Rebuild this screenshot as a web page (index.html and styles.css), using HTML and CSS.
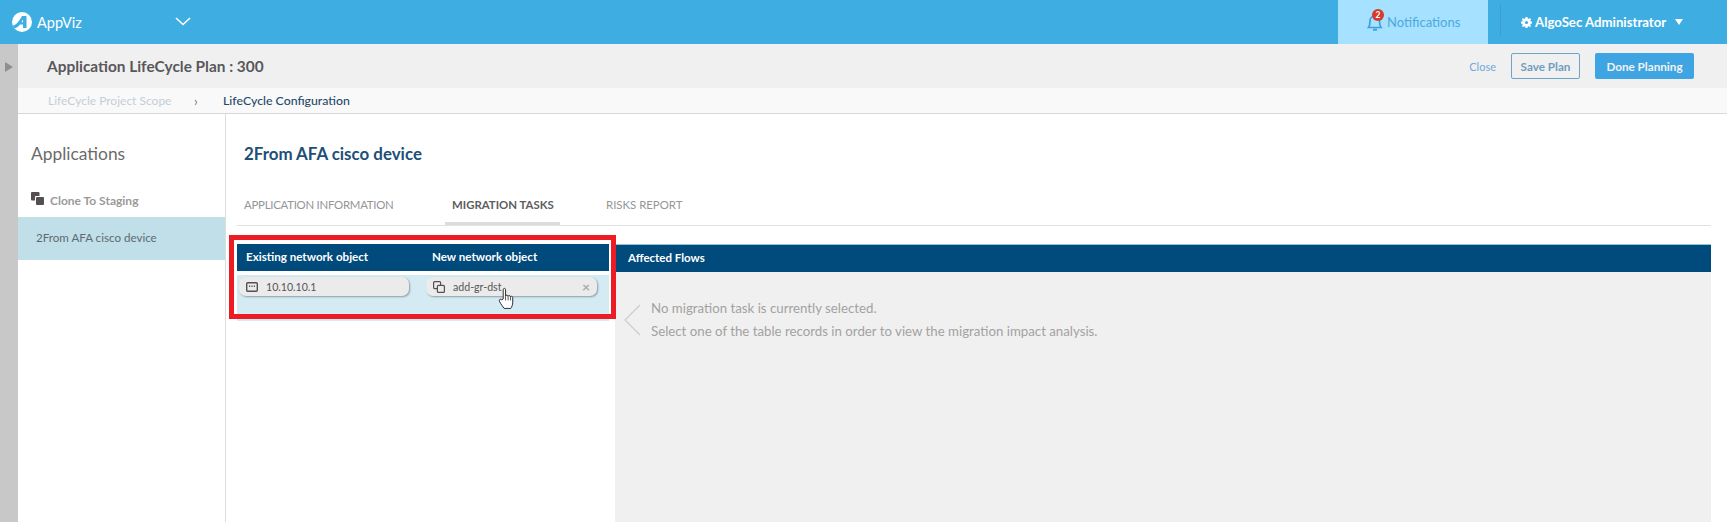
FILE: index.html
```html
<!DOCTYPE html>
<html lang="en">
<head>
<meta charset="utf-8">
<title>AppViz</title>
<link rel="stylesheet" href="styles.css">
</head>
<body>
<header class="topbar">
  <div class="brand">
    <svg class="logo" viewBox="0 0 20 20" width="20" height="20"><circle cx="10" cy="10" r="10" fill="#fff"/><path d="M.6 13.5 C4 13.5 7.5 8.5 10 4 L14.5 4 L14.5 16 L11 16 L11 12.5 L8 12.5 C6 15 3.5 17 2 15.8 Z" fill="#3eade2"/><path d="M11 7.6 L11 10.3 L9.4 10.3 Z" fill="#fff"/></svg>
    <span class="brand-name">AppViz</span>
  </div>
  <svg class="chev" viewBox="0 0 16 9" width="16" height="9"><path d="M1 1 L8 7.5 L15 1" fill="none" stroke="#fff" stroke-width="1.6"/></svg>
  <div class="top-right">
    <div class="notif">
      <span class="bell">
        <svg viewBox="0 0 16 20" width="16" height="20"><path d="M1.5 15.5 C3 13.5 3 11.5 3 9 C3 6 5.5 4.2 8 4.2 C10.5 4.2 12.5 6 12.5 9 C12.5 11.5 12.5 13.5 14 15.5 Z" fill="none" stroke="#3f9fd8" stroke-width="1.7"/><path d="M6 17.7 H10" stroke="#3f9fd8" stroke-width="2"/></svg>
        <span class="badge">2</span>
      </span>
      <span class="notif-label">Notifications</span>
    </div>
    <div class="user">
      <svg viewBox="0 0 12 12" width="11" height="11"><path d="M5 0h2l.3 1.6 1.1.5L9.8 1.2l1.2 1.2-.9 1.4.5 1.1L12 5v2l-1.4.3-.5 1.1.9 1.4-1.2 1.2-1.4-.9-1.1.5L7 12H5l-.3-1.4-1.1-.5-1.4.9L1 9.8l.9-1.4-.5-1.1L0 7V5l1.4-.1.5-1.1L1 2.4l1.2-1.2 1.4.9 1.1-.5Z" fill="#fff"/><circle cx="6" cy="6" r="1.7" fill="#3eade2"/></svg>
      <span class="user-name">AlgoSec Administrator</span>
      <span class="caret"></span>
    </div>
  </div>
</header>
<div class="shell">
  <div class="rail"><span class="rail-arrow"></span></div>
  <div class="page">
    <div class="plan-bar">
      <h1 class="plan-title">Application LifeCycle Plan : 300</h1>
      <div class="plan-actions">
        <span class="close">Close</span>
        <span class="btn btn-outline">Save Plan</span>
        <span class="btn btn-fill">Done Planning</span>
      </div>
    </div>
    <nav class="crumbs">
      <span class="crumb-off">LifeCycle Project Scope</span>
      <span class="crumb-sep">›</span>
      <span class="crumb-on">LifeCycle Configuration</span>
    </nav>
    <div class="work">
      <aside class="side">
        <h2 class="side-title">Applications</h2>
        <div class="side-group">
          <svg viewBox="0 0 13 13" width="13" height="13"><rect x="0" y="0" width="8.5" height="8.5" rx="1" fill="#55504f"/><rect x="4" y="4" width="9" height="9" rx="1" fill="#fff"/><rect x="5" y="5" width="8" height="8" rx="1" fill="#55504f"/></svg>
          <span>Clone To Staging</span>
        </div>
        <div class="side-item">2From AFA cisco device</div>
      </aside>
      <main class="content">
        <h2 class="app-title">2From AFA cisco device</h2>
        <div class="tabs">
          <span class="tab">APPLICATION INFORMATION</span>
          <span class="tab tab-active">MIGRATION TASKS</span>
          <span class="tab">RISKS REPORT</span>
        </div>
        <div class="panels">
          <section class="tasks">
            <div class="tasks-head">
              <span class="col">Existing network object</span>
              <span class="col">New network object</span>
            </div>
            <div class="tasks-row">
              <div class="chip chip-a">
                <svg viewBox="0 0 12 10" width="12" height="10"><rect x=".7" y=".7" width="10.6" height="8.6" rx="1" fill="none" stroke="#55504f" stroke-width="1.4"/><path d="M3 4.2h1.2M5.4 4.2h1.2M7.8 4.2H9" stroke="#55504f" stroke-width="1.6"/></svg>
                <span>10.10.10.1</span>
              </div>
              <div class="chip chip-b">
                <svg viewBox="0 0 12 12" width="12" height="12"><rect x=".6" y=".6" width="7" height="7" rx="1" fill="none" stroke="#55504f" stroke-width="1.2"/><rect x="4.4" y="4.4" width="7" height="7" rx="1" fill="#ecebec" stroke="#55504f" stroke-width="1.2"/></svg>
                <span>add-gr-dst</span>
                <span class="chip-x">×</span>
              </div>
            </div>
            <div class="annot"></div>
            <svg class="hand" viewBox="0 0 18 24" width="17" height="23"><path d="M5.5 12.5V2.7C5.5 .8 8 .8 8 2.7V9.5 C8.3 8 10.5 8 10.7 9.7 C11 8.4 13 8.6 13.2 10.2 C13.6 9.2 15.6 9.4 15.6 11 V16 C15.6 19 14.5 21 13.5 22.5 H6.5 C5 20.5 3.5 18.5 1.8 15.5 C.5 13.2 2.8 11.7 4 13.5 Z" fill="#fff" stroke="#222" stroke-width="1"/><path d="M8 9.5V14M10.7 9.7V14M13.2 10.2V14" stroke="#222" stroke-width=".8" fill="none"/></svg>
          </section>
          <section class="flows">
            <div class="flows-head">Affected Flows</div>
            <div class="flows-body">
              <svg class="back" viewBox="0 0 17 32" width="17" height="32"><path d="M16 1 L1 16 L16 31" fill="none" stroke="#ccc" stroke-width="1.2"/></svg>
              <div class="flows-msg">
                <p>No migration task is currently selected.</p>
                <p>Select one of the table records in order to view the migration impact analysis.</p>
              </div>
            </div>
          </section>
        </div>
      </main>
    </div>
  </div>
</div>
</body>
</html>
```
FILE: styles.css
```css
* { box-sizing: border-box; }
html, body { margin: 0; height: 100%; }
body { font-family: "Lato", "Open Sans", sans-serif; background: #fff; color: #555; overflow: hidden; display: flex; flex-direction: column; }
h1, h2, p { margin: 0; font-weight: inherit; }

.topbar { height: 44px; flex: none; background: #3eade2; display: flex; align-items: center; color: #fff; }
.brand { display: flex; align-items: center; gap: 5px; margin-left: 12px; width: 163px; }
.logo { flex: none; }
.brand-name { font-size: 14.5px; }
.chev { margin-top: -2px; }
.top-right { margin-left: auto; display: flex; align-items: stretch; height: 44px; }
.notif { width: 150px; background: #a6e1ff; display: flex; align-items: center; padding-left: 29px; color: #4aa9dd; font-size: 13px; }
.bell { position: relative; display: flex; width: 20px; }
.badge { position: absolute; left: 5px; top: -3px; width: 12px; height: 12px; border-radius: 50%; background: #d9382a; color: #fff; font-size: 8.5px; font-weight: 700; line-height: 12px; text-align: center; }
.user { width: 239px; display: flex; align-items: center; gap: 3px; padding-left: 33px; font-size: 13.2px; font-weight: 700; position: relative; }
.user::before { content: ""; position: absolute; left: 12px; top: 4px; bottom: 8px; width: 1px; background: #3b9fd6; }
.caret { margin-left: 6px; border-left: 4px solid transparent; border-right: 4px solid transparent; border-top: 6px solid #fff; }

.shell { flex: 1; display: flex; min-height: 0; }
.rail { width: 18px; flex: none; background: #c9c8c8; padding: 18px 0 0 5px; }
.rail-arrow { display: block; width: 0; height: 0; border-left: 8px solid #908f8f; border-top: 5px solid transparent; border-bottom: 5px solid transparent; }
.page { flex: 1; display: flex; flex-direction: column; min-width: 0; }

.plan-bar { height: 44px; flex: none; background: #f1f0f1; display: flex; align-items: center; padding: 0 33px 0 29px; }
.plan-title { font-size: 15.4px; font-weight: 700; color: #58585a; }
.plan-actions { margin-left: auto; display: flex; align-items: center; font-size: 11.7px; font-weight: 700; }
.close { color: #6fa9d8; font-size: 11px; font-weight: 400; margin-right: 15px; }
.btn { height: 26px; display: flex; align-items: center; justify-content: center; border-radius: 2px; }
.btn-outline { width: 69px; border: 1px solid #6da5c8; color: #6e9dc0; margin-right: 15px; }
.btn-fill { width: 99px; background: #3ea5e2; color: #f2f2f2; }

.crumbs { height: 26px; flex: none; background: #f9f9f9; border-bottom: 1px solid #d8d8d8; display: flex; align-items: center; padding-left: 30px; font-size: 12px; }
.crumb-off { color: #c5ced6; width: 146px; }
.crumb-sep { color: #777; width: 29px; font-size: 13px; }
.crumb-on { color: #1f4a6b; font-size: 12.3px; font-weight: 500; }

.work { flex: 1; display: flex; min-height: 0; }
.side { width: 208px; flex: none; border-right: 1px solid #ddd; padding-top: 28px; }
.side-title { font-size: 17.4px; color: #6b6b6b; padding-left: 13px; line-height: 24px; }
.side-group { display: flex; align-items: center; gap: 6px; padding-left: 13px; margin-top: 22px; height: 24px; font-size: 12px; font-weight: 700; color: #9a9a9a; }
.side-group svg { margin-top: -4px; }
.side-item { margin-top: 5px; height: 43px; background: #c0dfe9; display: flex; align-items: center; padding: 0 0 3px 18px; font-size: 11.6px; color: #5e6a70; }

.content { flex: 1; min-width: 0; padding: 28px 16px 0 11px; display: flex; flex-direction: column; }
.app-title { font-size: 16.9px; font-weight: 700; color: #1d4f78; padding-left: 7px; line-height: 24px; }
.tabs { margin-top: 23px; height: 37px; flex: none; border-bottom: 1px solid #e2e2e2; display: flex; align-items: flex-start; padding-left: 7px; font-size: 11.4px; color: #959595; }
.tab { height: 36px; padding-top: 9px; }
.tab:nth-child(1) { width: 201px; letter-spacing: -.25px; }
.tab-active { width: 115px; margin-right: 46px; padding-left: 7px; color: #5d5d5f; font-weight: 700; border-bottom: 3px solid #dcdcdc; }

.panels { flex: 1; min-height: 0; display: flex; margin-top: 18px; }
.tasks { position: relative; width: 378px; flex: none; }
.tasks-head { width: 372px; height: 27px; background: #004a7c; color: #fff; display: flex; align-items: center; font-size: 11.6px; font-weight: 700; padding: 0 0 2px 9px; }
.col:first-child { width: 186px; }
.tasks-row { width: 372px; height: 46px; margin-top: 4px; background: #d4ebf3; display: flex; padding: 2px 0 0 2px; gap: 17px; }
.chip { height: 19px; width: 170px; border-radius: 7px; background: #ecebec; box-shadow: 1px 1px 2px #8e9ba3; display: flex; align-items: center; padding-left: 7px; gap: 8px; font-size: 10.6px; color: #555; }
.chip-b { width: 171px; }
.chip-x { margin-left: auto; margin-right: 7px; color: #aaa; font-size: 14px; font-weight: 700; line-height: 1; }
.annot { position: absolute; left: -8px; top: -9px; width: 387px; height: 84px; border: 5px solid #ed1c24; }
.hand { position: absolute; left: 261px; top: 43px; }

.flows { flex: 1; min-width: 0; display: flex; flex-direction: column; }
.flows-head { height: 28px; flex: none; background: #004a7c; color: #fff; font-size: 11.5px; font-weight: 700; display: flex; align-items: center; padding: 0 0 3px 13px; border-top: 1px solid #8ec3dc; }
.flows-body { flex: 1; background: #f0f0f0; display: flex; align-items: flex-start; padding: 25px 0 0 9px; }
.back { margin: 7px 10px 0 0; flex: none; }
.flows-msg { font-size: 13.25px; color: #a2a2a2; line-height: 23px; }
```
